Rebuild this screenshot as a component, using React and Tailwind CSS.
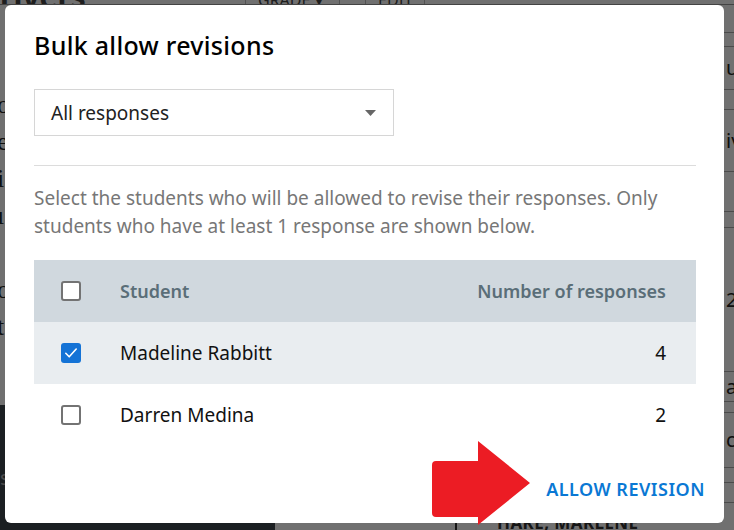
import React from "react";

const students = [
    {name: "Madeline Rabbitt", count: 4, checked: true},
    {name: "Darren Medina", count: 2, checked: false},
];

// rows of the page behind the dialog (only a sliver shows on the right)
const sideRows = [
    {h: 28, text: ""},
    {h: 14, text: ""},
    {h: 43, text: "uc"},
    {h: 20, text: ""},
    {h: 62, text: "iv"},
    {h: 40, text: ""},
    {h: 16, text: ""},
    {h: 144, text: "2"},
    {h: 30, text: "as"},
    {h: 11, text: ""},
    {h: 55, text: "ck"},
    {h: 15, text: ""},
    {h: 20, text: ""},
];

const leftLetters = ["o", "e", "i", "ı", "", "o", "t"];

function CheckBox({checked}) {
    if (checked)
        return (
            <span className="flex h-5 w-5 items-center justify-center rounded-[3px] bg-[#1473d6]">
                <svg width="16" height="16" viewBox="0 0 16 16" fill="none">
                    <path d="M2.8 8.3 L6.2 11.8 L13.2 4" stroke="white" strokeWidth="1.6" strokeLinecap="round" strokeLinejoin="round"/>
                </svg>
            </span>
        );
    return <span className="block h-5 w-5 rounded-[3px] border-2 border-[#737373] bg-white"/>;
}

function BackgroundPage() {
    return (
        <div className="flex h-full flex-col bg-white">
            <div className="flex h-[5px] shrink-0 items-end overflow-hidden border-b border-[#9a9a9a]">
                <span className="w-[245px] shrink-0 text-[30px] font-bold leading-[14px] text-[#444]">ons arise on rivers</span>
                <span className="flex h-full w-[94px] shrink-0 items-end border-l border-[#bbb] pl-3 text-[16px] leading-[8px] text-[#444]">GRADE ▾</span>
                <span className="h-full w-[26px] shrink-0 border-l border-[#bbb]"/>
                <span className="flex h-full w-[59px] shrink-0 items-end border-l border-[#bbb] pl-3 text-[16px] leading-[8px] text-[#444]">EDIT</span>
                <span className="h-full border-l border-[#bbb]"/>
            </div>
            <div className="flex flex-1">
                <div className="flex w-[275px] shrink-0 flex-col">
                    <div className="flex h-[400px] flex-col gap-[14px] pt-[88px] font-[Liberation_Serif,serif] text-[26px] leading-[23px] text-[#222]">
                        {leftLetters.map((l, i) => (
                            <span key={i} className="-ml-[3px] h-[23px]">{l}</span>
                        ))}
                    </div>
                    <div className="flex flex-1 items-center bg-[#3f474f] pt-[20px] text-[20px] text-[#aaa]">s</div>
                </div>
                <div className="flex flex-1 flex-col">
                    {sideRows.map((r, i) => (
                        <div key={i} style={{height: r.h}}
                             className="flex items-center border-b border-[#aaa] pl-[451px] text-[20px] text-[#222]">
                            {r.text}
                        </div>
                    ))}
                    <div className="flex flex-1 items-end">
                        <span className="ml-[180px] h-[8px] w-[2px] bg-[#333]"/>
                        <span className="ml-[40px] text-[17px] font-bold leading-[14px] tracking-wide text-[#333]">HARE, MARLENE</span>
                    </div>
                </div>
            </div>
        </div>
    );
}

function App() {
    return (
        <div className="relative h-[530px] w-[734px] overflow-hidden font-['Noto_Sans',sans-serif]">
            <BackgroundPage/>
            <div className="absolute inset-0 bg-black/[0.56]"/>

            <div className="absolute left-[5px] top-[5px] flex h-[518px] w-[719px] flex-col rounded-[6px] bg-white pl-[29px] pr-[28px] pt-[25px]">
                <h2 className="h-[30px] text-[25px] font-medium leading-[30px] tracking-[0.3px] text-black">Bulk allow revisions</h2>

                <div className="mt-[29px] flex h-[47px] w-[360px] items-center justify-between border border-[#d6d6d6] pl-4 pr-[17px]">
                    <span className="text-[19px] leading-6 text-[#222]">All responses</span>
                    <svg width="11" height="6" viewBox="0 0 11 6">
                        <path d="M0 0 H11 L5.5 6 Z" fill="#666"/>
                    </svg>
                </div>

                <div className="mt-[29px] h-px bg-[#dcdcdc]"/>

                <p className="mt-[18px] w-[630px] text-[19px] leading-[28px] text-[#777]">
                    Select the students who will be allowed to revise their responses. Only students who have at least 1 response are shown below.
                </p>

                <div className="mt-[20px] flex flex-col">
                    <div className="flex h-[62px] items-center bg-[#d0d8de] text-[18px] font-semibold text-[#5a6e78]">
                        <div className="w-[86px] pl-[27px]"><CheckBox checked={false}/></div>
                        <span>Student</span>
                        <span className="ml-auto pr-[30px]">Number of responses</span>
                    </div>
                    {students.map(s => (
                        <div key={s.name}
                             className={`flex h-[62px] items-center text-[19px] text-[#111] ${s.checked ? "bg-[#e9edf0]" : "bg-white"}`}>
                            <div className="w-[86px] pl-[27px]"><CheckBox checked={s.checked}/></div>
                            <span>{s.name}</span>
                            <span className="ml-auto pr-[30px]">{s.count}</span>
                        </div>
                    ))}
                </div>

                <div className="mt-[31px] flex justify-end">
                    <button className="-mr-[9px] h-6 text-[18px] font-semibold leading-6 tracking-[0.5px] text-[#0a78d4]">ALLOW REVISION</button>
                </div>
            </div>

            {/* red annotation arrow */}
            <svg className="absolute left-[432px] top-[441px]" width="99" height="85" viewBox="0 0 99 85">
                <path d="M4 20 H46 V0 L98 42 L46 84 V76 H4 Q0 76 0 72 V24 Q0 20 4 20 Z" fill="#ec1c24"/>
            </svg>
        </div>
    );
}

export default App;
